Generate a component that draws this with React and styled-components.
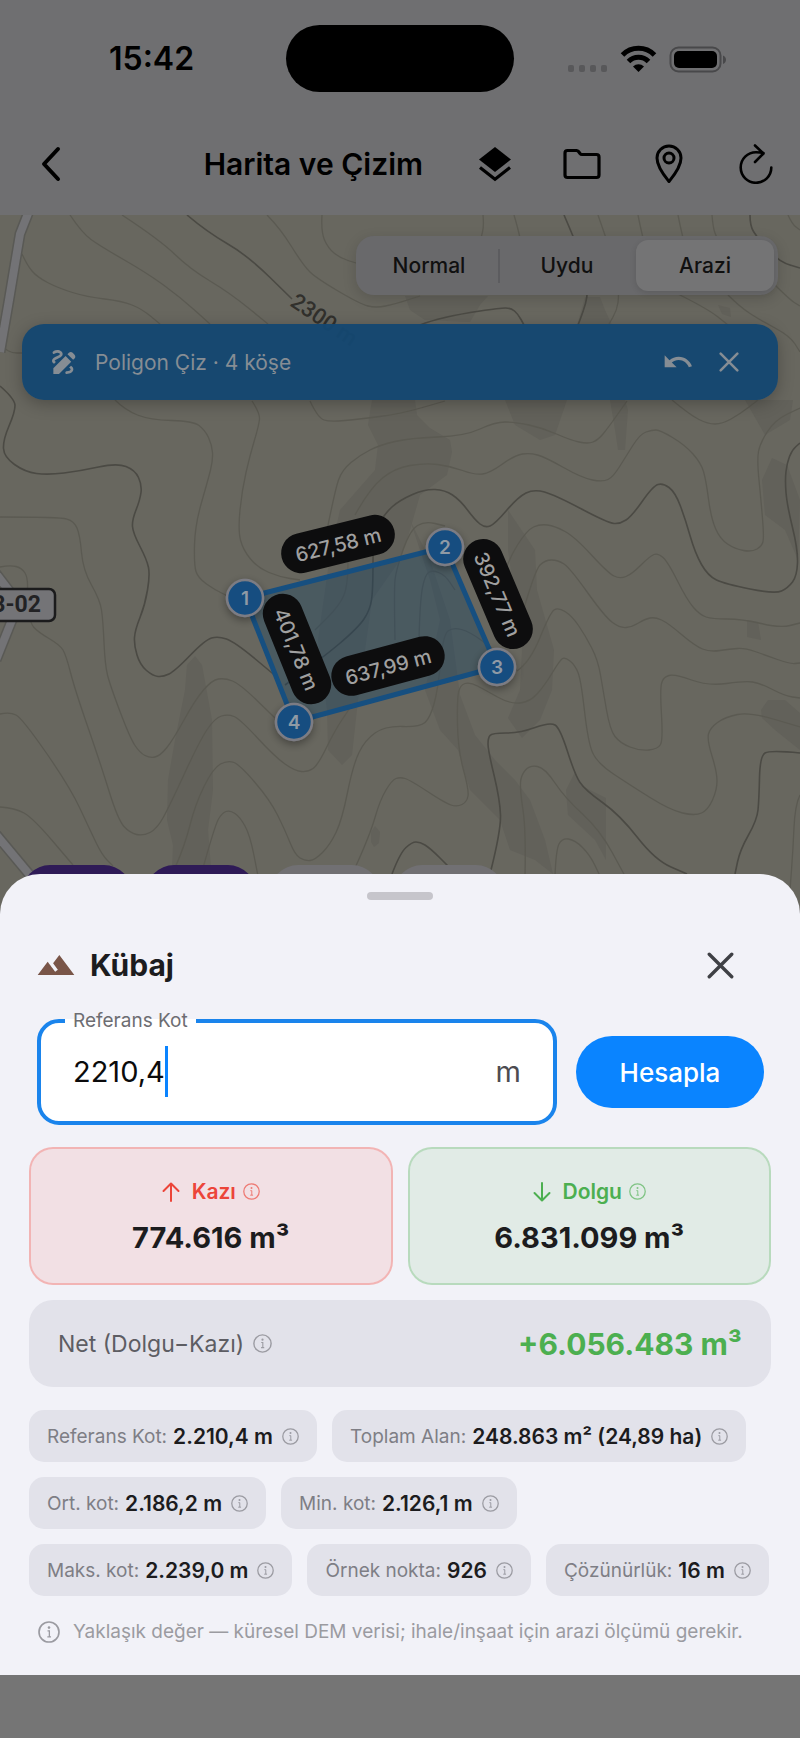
import React, { useState } from 'react';
import styled, { createGlobalStyle } from 'styled-components';
import { MdDraw, MdLandscape, MdUndo } from 'react-icons/md';

const shades = [
  '405,296 410,310 425,320 470,322 480,305 488,296',
  '585,297 600,297 605,310 612,325 577,325',
  '718,305 730,308 731,317 722,314',
  '372,400 368,425 378,445 375,470 340,510 330,555 318,640 327,710 328,750 342,765 352,755 358,700 372,600 400,560 410,530 420,495 447,475 452,452 450,440 430,428 417,415 415,400',
  '410,520 430,580 440,620 425,690 440,730 458,750 470,790 500,820 510,850 535,860 553,874 545,840 530,800 515,780 495,760 475,735 460,695 450,620 430,560',
  '508,510 535,550 537,590 554,650 552,690 540,720 522,738 508,718 520,690 522,650 515,600 508,550',
  '505,400 515,425 540,440 555,435 567,400',
  '610,400 615,430 618,450 625,450 628,410 625,400',
  '745,400 765,435 790,420 793,400',
  '762,480 772,458 787,465 800,500 798,560 785,530 765,515',
  '747,620 758,622 761,640 747,637',
  '761,710 768,700 785,700 800,713 800,750 775,730 762,718',
  '566,790 575,772 580,785 606,798 606,860 595,840 568,815',
  '187,665 195,656 202,665 212,720 213,790 208,830 211,868 172,868 173,845 167,820 168,780 175,740 185,690',
  '371,832 375,826 380,832 379,843 374,847 371,842',
];

const contours = [
  '22,254 27,265 37,277 58,288 87,297 122,301 142,309 160,324',
  '70,215 82,233 100,246 147,273 180,297 210,324',
  '122,215 160,240 190,269 230,293 268,324',
  '267,215 280,228 303,265 316,278 360,304 376,308 395,304 420,296',
  '322,215 321,232 328,248 340,258 356,263',
  '483,215 484,226 481,238',
  '514,215 517,225 520,238',
  '598,215 606,238 617,270 619,295 617,310 609,324',
  '638,215 640,225 643,238',
  '678,215 680,225 683,238',
  '712,215 713,228 717,238',
  '788,215 792,224 800,230',
  '678,294 708,309 728,325',
  '728,295 740,307 760,320 790,336 800,352',
  '773,283 790,300 800,306',
  '0,345 5,349 12,353 22,353',
  '115,400 125,410 150,420 193,421 205,430 212,445 213,460 208,480 195,525 194,565 198,578 215,590 230,597',
  '252,401 260,413 259,425 250,455 242,490 238,530 243,550 258,568 280,577 300,580',
  '310,401 318,418 330,422 360,419 400,414 445,401',
  '325,540 335,490 342,470 360,455 380,445 410,438 465,436 495,422 515,422 543,428 570,440 588,444 598,440 608,428 627,401',
  '355,515 370,488 395,468 425,463 450,466 475,475 490,473 515,455 530,453 545,457 582,478 603,482 613,477 625,458 640,434 652,430 660,430 685,445 701,463 706,480 711,518 720,539 735,549 752,552 762,546 764,537 761,500 757,460 760,443 775,420 800,408',
  '500,585 508,560 527,530 540,524 555,526 575,537 608,573 620,579 632,574 650,556 658,553 668,562 687,600 700,615 712,619 742,619 780,628 800,623',
  '522,615 535,570 545,560 558,560 570,568 605,617 620,628 632,627 645,619 655,617 668,623 695,646 710,652 730,649 745,648 765,655 790,664 800,663',
  '517,671 530,662 550,613 558,607 572,616 585,635 598,660 603,690 610,730 620,743 640,751 658,749 663,740 660,690 663,677 675,674 708,686 745,681 760,683 785,696 800,698',
  '355,868 370,835 380,800 392,780 400,777 410,780 445,803 457,807 467,802 469,790 458,750 457,700 460,685 470,682 485,690 510,704 530,702 545,685 560,660 565,657 575,665 581,680 588,742 597,763 630,785 670,810 695,816 708,810 717,790 717,772 707,740 710,728 725,717 750,712 800,727',
  '525,876 526,830 520,790 521,775 530,765 545,768 565,798 600,830 625,876',
  '555,876 556,850 562,838 575,840 590,855 600,876',
  '800,795 795,805 793,850 790,890',
  '672,400 690,415 708,424 722,424 740,414 758,400',
  '0,517 60,517 74,521 80,535 83,570 100,600 103,620 105,665 110,685 130,738 140,753 150,758 160,756 173,740 195,700 212,680 225,678 240,684 275,718',
  '0,567 10,565 22,568 28,578 27,600 30,623 38,632 60,645 66,655 75,690 100,762 118,820 130,833 143,836 157,829 170,805 200,740 215,718 228,714 240,719 275,757 295,771 308,772 318,765 335,730 352,705',
  '175,868 185,845 195,805 213,768 228,760 240,765 270,800 285,830 295,855 305,861 315,860 330,845 342,820 353,765 365,740 385,726 420,727 430,718 438,690 443,635 453,627 470,632 492,648',
  '203,868 215,825 222,813 230,810 240,817 250,835 258,876',
  '0,714 10,712 22,718 70,787 90,830 102,855 113,866',
  '0,807 15,808 33,818 73,865',
  '348,560 348,585 340,605 315,630',
  '395,640 394,590 396,570 410,530 425,521 445,526',
  '419,640 420,600 425,575 432,570 445,575 455,590',
];

const mainContours = [
  '187,215 207,232 247,255 292,299',
  '564,215 574,238 586,270 588,295 583,312 578,325',
  '750,215 750,226 757,237 765,246 780,262 800,268',
  '420,325 430,321 460,314 500,308 511,308 518,314 524,325',
  '0,386 15,399 15,412 3,440 4,457 25,472 48,475 80,471 117,463 135,470 142,485 140,500 132,520 133,533 147,560 150,575 145,605 135,630 134,645 140,665 153,676 163,677 175,671 205,640 218,636 235,642 278,678',
  '285,685 320,660 358,628 370,610 373,590 373,535 385,513 400,500 425,489 445,490 460,500 475,520 485,528 495,524 518,497 534,489 555,495 608,523 620,524 632,516 653,486 663,483 675,492 685,518 695,553 708,576 725,584 775,594 788,588 797,576 798,550 787,505 785,480 787,463 792,450 800,443',
  '491,870 501,830 500,800 488,750 488,738 492,733 520,733 550,722 560,728 575,775 585,790 620,815 655,860 687,874',
  '800,753 770,750 760,756 759,800 757,820 740,850 735,874',
  '392,874 400,853 412,842 420,842 430,848 450,868',
];

// Rounds the corners of a contour by running curves between its midpoints.
const toPath = (line) => {
  const pts = line.split(' ').map((pair) => pair.split(',').map(Number));
  let d = `M${pts[0]}`;
  for (let i = 1; i < pts.length - 1; i++) {
    const [x, y] = pts[i];
    const [nx, ny] = pts[i + 1];
    d += ` Q${x},${y} ${(x + nx) / 2},${(y + ny) / 2}`;
  }
  return `${d} L${pts[pts.length - 1]}`;
};

const corners = [
  { id: 1, x: 245, y: 598 },
  { id: 2, x: 445, y: 547 },
  { id: 3, x: 497, y: 667 },
  { id: 4, x: 294, y: 722 },
];

const edges = [
  { text: '627,58 m', x: 338, y: 544, angle: -14 },
  { text: '392,77 m', x: 498, y: 594, angle: 67 },
  { text: '637,99 m', x: 388, y: 666, angle: -15 },
  { text: '401,78 m', x: 297, y: 649, angle: 68 },
];

const stats = [
  [
    { label: 'Referans Kot:', value: '2.210,4 m' },
    { label: 'Toplam Alan:', value: '248.863 m² (24,89 ha)' },
  ],
  [
    { label: 'Ort. kot:', value: '2.186,2 m' },
    { label: 'Min. kot:', value: '2.126,1 m' },
  ],
  [
    { label: 'Maks. kot:', value: '2.239,0 m' },
    { label: 'Örnek nokta:', value: '926' },
    { label: 'Çözünürlük:', value: '16 m' },
  ],
];

const InfoIcon = ({ size = 17 }) => (
  <svg width={size} height={size} viewBox='0 0 24 24' fill='none'>
    <circle cx='12' cy='12' r='10.9' stroke='currentColor' strokeWidth='1.8' />
    <circle cx='12' cy='7.2' r='1.4' fill='currentColor' />
    <path
      d='M10.4 10.8h2v6.2M10.2 17.200h4'
      stroke='currentColor'
      strokeWidth='1.4'
    />
  </svg>
);

const CloseIcon = ({ size, stroke }) => (
  <svg width={size} height={size} viewBox='0 0 24 24' fill='none'>
    <path
      d='M2 2l20 20M22 2L2 22'
      stroke='currentColor'
      strokeWidth={stroke}
      strokeLinecap='round'
    />
  </svg>
);

const ArrowIcon = ({ down }) => (
  <svg width='18' height='20' viewBox='0 0 18 20' fill='none'>
    <path
      d={down ? 'M9 1v17M1.5 11L9 18.5l7.5-7.5' : 'M9 19V2M1.5 9L9 1.5 16.5 9'}
      stroke='currentColor'
      strokeWidth='2'
      strokeLinecap='round'
      strokeLinejoin='round'
    />
  </svg>
);

const StatusIcons = () => (
  <svg width='160' height='28' viewBox='567 44 160 28' fill='none'>
    {[568, 579, 590, 601].map((x) => (
      <rect key={x} x={x} y='64' width='6' height='7' rx='2' fill='#58585a' />
    ))}
    <path d='M622.5 54a22.5 22.5 0 0 1 32 0' stroke='#000' strokeWidth='5' />
    <path d='M628.5 60.5a14 14 0 0 1 20 0' stroke='#000' strokeWidth='5' />
    <path d='M638.5 71l-5.5-5.5a8 8 0 0 1 11 0z' fill='#000' />
    <rect
      x='670.5'
      y='46.5'
      width='50'
      height='24'
      rx='8'
      stroke='#48484a'
      strokeWidth='2'
    />
    <rect x='674' y='50' width='43' height='17' rx='5' fill='#000' />
    <path d='M723 54.5c4 1.5 4 7 0 8.5z' fill='#48484a' />
  </svg>
);

const Terrain = () => (
  <TerrainSvg viewBox='0 215 800 695' preserveAspectRatio='xMidYMin slice'>
    <defs>
      <filter id='drop' x='-50%' y='-50%' width='200%' height='200%'>
        <feDropShadow dx='0' dy='3' stdDeviation='4' floodOpacity='0.35' />
      </filter>
    </defs>
    <rect x='-400' y='215' width='1600' height='1400' fill='#68675f' />
    {shades.map((points) => (
      <polygon key={points} points={points} fill='#62615a' />
    ))}
    <g fill='none' stroke='#5b5a52' strokeWidth='1.3'>
      {contours.map((line) => (
        <path key={line} d={toPath(line)} />
      ))}
    </g>
    <g fill='none' stroke='#4b4a44' strokeWidth='1.6'>
      {mainContours.map((line) => (
        <path key={line} d={toPath(line)} />
      ))}
    </g>
    <g fill='none' stroke='#595955' strokeWidth='11'>
      <path d='M29 211L20 234 9 300 0 352' />
      <path d='M-6 571L10 592' />
      <path d='M12 620L-4 660' />
      <path d='M-6 832L34 880' />
    </g>
    <g fill='none' stroke='#737376' strokeWidth='8'>
      <path d='M29 211L20 234 9 300 0 352' />
      <path d='M-6 571L10 592' />
      <path d='M12 620L-4 660' />
      <path d='M-6 832L34 880' />
    </g>
    <rect
      x='-20'
      y='589'
      width='75'
      height='32'
      rx='6'
      fill='#747477'
      stroke='#1b1b1c'
      strokeWidth='2.5'
    />
    <SignText x='41' y='612'>
      3-02
    </SignText>
    <HeightText transform='translate(289 305) rotate(34)'>2300 m</HeightText>

    <polygon
      points={corners.map(({ x, y }) => `${x},${y}`).join(' ')}
      fill='rgba(20, 66, 100, 0.35)'
      stroke='#164f80'
      strokeWidth='5'
    />
    {edges.map(({ text, x, y, angle }) => (
      <g key={text} transform={`translate(${x} ${y}) rotate(${angle})`}>
        <rect x='-58' y='-20' width='116' height='40' rx='20' fill='#0d0d0e' />
        <EdgeText y='8'>{text}</EdgeText>
      </g>
    ))}
    {corners.map(({ id, x, y }) => (
      <g key={id}>
        <circle
          cx={x}
          cy={y}
          r='18'
          fill='#164e80'
          stroke='#7c7c84'
          strokeWidth='2.5'
          filter='url(#drop)'
        />
        <CornerText x={x} y={y + 7}>
          {id}
        </CornerText>
      </g>
    ))}
  </TerrainSvg>
);

const App = () => {
  const [level, setLevel] = useState('2210,4');
  const [layer, setLayer] = useState('Arazi');

  return (
    <Page>
      <GlobalStyle />
      <StatusBar>
        <Time>15:42</Time>
        <Island />
        <StatusIcons />
      </StatusBar>

      <NavBar>
        <IconButton aria-label='Geri'>
          <svg width='22' height='36' viewBox='0 0 22 36' fill='none'>
            <path
              d='M18 3L4 18l14 15'
              stroke='#000'
              strokeWidth='4'
              strokeLinecap='round'
              strokeLinejoin='round'
            />
          </svg>
        </IconButton>
        <Title>Harita ve Çizim</Title>
        <Actions>
          <IconButton aria-label='Katmanlar'>
            <svg width='34' height='36' viewBox='0 0 34 36'>
              <path d='M17 1l16 12.5L17 26 1 13.5z' fill='#000' />
              <path
                d='M2 21.5l15 11.8 15-11.8'
                fill='none'
                stroke='#000'
                strokeWidth='3.2'
              />
            </svg>
          </IconButton>
          <IconButton aria-label='Klasör'>
            <svg width='38' height='32' viewBox='0 0 38 32' fill='none'>
              <path
                d='M4.5 2.5h9q1.2 0 2 1l1.5 2q.8 1 2 1h14.5q2.5 0 2.5 2.5v18q0 2.5-2.5 2.5h-29q-2.5 0-2.5-2.5V5q0-2.5 2.5-2.5z'
                stroke='#000'
                strokeWidth='3.2'
              />
            </svg>
          </IconButton>
          <IconButton aria-label='Konum'>
            <svg width='28' height='40' viewBox='0 0 28 40' fill='none'>
              <path
                d='M14 37.5C12 35 2 23.5 2 14a12 12 0 0 1 24 0c0 9.5-10 21-12 23.500z'
                stroke='#000'
                strokeWidth='3'
                strokeLinejoin='round'
              />
              <circle cx='14' cy='14' r='5' stroke='#000' strokeWidth='3' />
            </svg>
          </IconButton>
          <IconButton aria-label='Yenile'>
            <svg width='34' height='40' viewBox='0 0 34 40' fill='none'>
              <path
                d='M32.3 23.5a15.3 15.3 0 1 1-15.3-15.3q4 0 7.5.8M16 1.5l8.5 8-8.5 8.5'
                stroke='#000'
                strokeWidth='2.6'
                strokeLinecap='round'
                strokeLinejoin='round'
              />
            </svg>
          </IconButton>
        </Actions>
      </NavBar>

      <MapArea>
        <Terrain />
        <Segments>
          {['Normal', 'Uydu', 'Arazi'].map((name) => (
            <Segment
              key={name}
              $active={name === layer}
              onClick={() => setLayer(name)}
            >
              {name}
            </Segment>
          ))}
        </Segments>
        <Banner>
          <MdDraw size={32} />
          <BannerText>Poligon Çiz · 4 köşe</BannerText>
          <BannerButton aria-label='Geri al'>
            <MdUndo size={32} />
          </BannerButton>
          <BannerButton aria-label='İptal'>
            <CloseIcon size={20} stroke={3} />
          </BannerButton>
        </Banner>
        <Tools>
          <Tool $on aria-label='Poligon' />
          <Tool $on aria-label='Kübaj' />
          <Tool aria-label='Mesafe' />
          <Tool aria-label='Nokta' />
        </Tools>
      </MapArea>

      <Sheet>
        <Handle />
        <SheetHeader>
          <MdLandscape size={40} color='#795548' />
          <SheetTitle>Kübaj</SheetTitle>
          <CloseButton aria-label='Kapat'>
            <CloseIcon size={27} stroke={3} />
          </CloseButton>
        </SheetHeader>

        <Form onSubmit={(e) => e.preventDefault()}>
          <Field>
            <Legend>
              <label htmlFor='level'>Referans Kot</label>
            </Legend>
            <FieldRow>
              <LevelInput
                id='level'
                value={level}
                inputMode='decimal'
                autoComplete='off'
                onChange={(e) => setLevel(e.target.value)}
              />
              <Caret />
              <Unit>m</Unit>
            </FieldRow>
          </Field>
          <Submit type='submit'>Hesapla</Submit>
        </Form>

        <Cards>
          <Card $tint='244, 67, 54'>
            <CardLabel $color='#ec4539'>
              <ArrowIcon />
              <strong>Kazı</strong>
              <InfoIcon />
            </CardLabel>
            <CardValue>774.616 m³</CardValue>
          </Card>
          <Card $tint='76, 175, 80'>
            <CardLabel $color='#4caf50'>
              <ArrowIcon down />
              <strong>Dolgu</strong>
              <InfoIcon />
            </CardLabel>
            <CardValue>6.831.099 m³</CardValue>
          </Card>
        </Cards>

        <Net>
          <NetLabel>
            Net (Dolgu−Kazı)
            <InfoIcon size={19} />
          </NetLabel>
          <NetValue>+6.056.483 m³</NetValue>
        </Net>

        <Stats>
          {stats.map((row) => (
            <StatRow key={row[0].label}>
              {row.map(({ label, value }) => (
                <Stat key={label}>
                  <span>{label}</span>
                  <strong>{value}</strong>
                  <InfoIcon />
                </Stat>
              ))}
            </StatRow>
          ))}
        </Stats>

        <Note>
          <InfoIcon size={22} />
          Yaklaşık değer — küresel DEM verisi; ihale/inşaat için arazi ölçümü
          gerekir.
        </Note>
      </Sheet>
    </Page>
  );
};

const GlobalStyle = createGlobalStyle`
  * {
    box-sizing: border-box;
  }
  body {
    margin: 0;
    background: #757575;
    font-family: Inter, 'Liberation Sans', sans-serif;
  }
  button,
  input {
    font-family: inherit;
  }
  button {
    display: flex;
    align-items: center;
    justify-content: center;
    padding: 0;
    border: none;
    background: none;
    color: inherit;
    cursor: pointer;
  }
  svg {
    flex-shrink: 0;
  }
`;

const Page = styled.main`
  display: flex;
  flex-direction: column;
  padding-bottom: 63px;
`;

const StatusBar = styled.div`
  display: grid;
  grid-template-columns: 1fr auto 1fr;
  align-items: center;
  height: 117px;
  padding: 0 73px;
  background: #6f6f71;
  svg {
    justify-self: end;
  }
`;

const Time = styled.div`
  padding-left: 36px;
  font-size: 32px;
  font-weight: 600;
`;

const Island = styled.div`
  width: 228px;
  height: 67px;
  border-radius: 34px;
  background: #000;
`;

const NavBar = styled.header`
  display: flex;
  align-items: center;
  height: 98px;
  padding: 0 16px 4px 23px;
  background: #6f6f71;
`;

const IconButton = styled.button`
  width: 56px;
  height: 56px;
`;

const Title = styled.h1`
  margin: 0 44px 0 auto;
  font-size: 30px;
  font-weight: 600;
  white-space: nowrap;
`;

const Actions = styled.div`
  display: flex;
  gap: 31px;
`;

const MapArea = styled.section`
  position: relative;
  display: flex;
  flex-direction: column;
  min-height: 695px;
  padding: 21px 22px 0;
  overflow: hidden;
`;

const TerrainSvg = styled.svg`
  position: absolute;
  inset: 0;
  width: 100%;
  height: 100%;
`;

const MapText = styled.text`
  font-family: Inter, 'Liberation Sans', sans-serif;
  font-weight: 500;
  text-anchor: middle;
`;

const EdgeText = styled(MapText)`
  font-size: 20px;
  fill: #a0a0a0;
`;

const CornerText = styled(MapText)`
  font-size: 19px;
  font-weight: 600;
  fill: #8f9aa5;
`;

const SignText = styled(MapText)`
  font-family: Roboto, sans-serif;
  font-size: 23px;
  font-weight: 700;
  text-anchor: end;
  fill: #222224;
`;

const HeightText = styled(MapText)`
  font-family: Roboto, sans-serif;
  font-size: 22px;
  text-anchor: start;
  fill: #31302c;
`;

const Segments = styled.div`
  position: relative;
  display: grid;
  grid-template-columns: repeat(3, 1fr);
  align-self: flex-end;
  width: 422px;
  height: 59px;
  padding: 4px;
  border-radius: 18px;
  background: #69696b;
  box-shadow: 0 4px 14px rgba(0, 0, 0, 0.15);
`;

const Segment = styled.button`
  border-radius: 12px;
  background: ${({ $active }) => ($active ? '#747475' : 'none')};
  box-shadow: ${({ $active }) =>
    $active ? '0 2px 6px rgba(0, 0, 0, 0.12)' : 'none'};
  color: #101010;
  font-size: 21px;
  font-weight: 500;
  &:first-child::after {
    content: '';
    position: absolute;
    left: 142px;
    width: 2px;
    height: 34px;
    background: #5c5c5f;
  }
`;

const Banner = styled.div`
  position: relative;
  display: flex;
  align-items: center;
  height: 76px;
  margin-top: 29px;
  padding: 0 29px 0 26px;
  border-radius: 22px;
  background: rgba(20, 71, 112, 0.96);
  box-shadow: 0 4px 16px rgba(0, 0, 0, 0.25);
  color: #868d94;
`;

const BannerText = styled.div`
  flex: 1;
  margin-left: 15px;
  font-size: 21px;
`;

const BannerButton = styled.button`
  width: 40px;
  height: 40px;
  margin-left: 11px;
`;

const Tools = styled.div`
  position: relative;
  display: flex;
  gap: 14px;
  height: 45px;
  margin-top: auto;
`;

const Tool = styled.button`
  width: 110px;
  height: 72px;
  border-radius: 28px;
  background: ${({ $on }) => ($on ? '#2f1b57' : '#717073')};
`;

const Sheet = styled.section`
  position: relative;
  display: flex;
  flex-direction: column;
  margin-top: -36px;
  padding: 18px 29px 29px;
  border-radius: 40px 40px 0 0;
  background: #f2f2f8;
  color: #1c1c1e;
`;

const Handle = styled.div`
  align-self: center;
  width: 66px;
  height: 8px;
  border-radius: 4px;
  background: #c6c5cb;
`;

const SheetHeader = styled.div`
  display: flex;
  align-items: center;
  height: 56px;
  margin-top: 37px;
  padding: 0 23px 0 7px;
`;

const SheetTitle = styled.h2`
  flex: 1;
  margin: 0 0 0 14px;
  font-size: 30px;
  font-weight: 700;
`;

const CloseButton = styled.button`
  width: 56px;
  height: 56px;
  color: #3f4045;
`;

const Form = styled.form`
  display: flex;
  align-items: center;
  gap: 19px;
  margin-top: 16px;
  padding: 0 7px 0 8px;
`;

const Field = styled.fieldset`
  flex: 1;
  min-width: 0;
  height: 116px;
  margin: 0;
  padding: 0 32px;
  border: 4px solid #1a84ec;
  border-radius: 22px;
  background: #fff;
`;

const Legend = styled.legend`
  margin-left: -8px;
  padding: 0 8px;
  color: #6d6d72;
  font-size: 19px;
  line-height: 24px;
`;

const FieldRow = styled.div`
  display: flex;
  align-items: center;
  height: 76px;
`;

const LevelInput = styled.input`
  field-sizing: content;
  min-width: 20px;
  padding: 0;
  border: none;
  outline: none;
  background: none;
  caret-color: transparent;
  color: #0b0b0c;
  font-size: 29px;
`;

const Caret = styled.span`
  width: 3px;
  height: 51px;
  background: #0a84ff;
`;

const Unit = styled.span`
  margin-left: auto;
  color: #4c4c51;
  font-size: 29px;
`;

const Submit = styled.button`
  width: 188px;
  height: 72px;
  margin-top: 10px;
  border-radius: 36px;
  background: #0a84ff;
  color: #fff;
  font-size: 26px;
  font-weight: 500;
`;

const Cards = styled.div`
  display: grid;
  grid-template-columns: 1fr 1fr;
  gap: 15px;
  margin-top: 22px;
`;

const Card = styled.div`
  display: flex;
  flex-direction: column;
  align-items: center;
  justify-content: center;
  gap: 12px;
  height: 138px;
  padding-top: 3px;
  border: 2px solid rgba(${({ $tint }) => $tint}, 0.35);
  border-radius: 24px;
  background: rgba(${({ $tint }) => $tint}, 0.1);
  background-clip: padding-box;
`;

const CardLabel = styled.div`
  display: flex;
  align-items: center;
  color: ${({ $color }) => $color};
  font-size: 21px;
  line-height: 28px;
  strong {
    margin: 0 7px 0 12px;
    font-weight: 600;
  }
  svg:last-child {
    opacity: 0.65;
  }
`;

const CardValue = styled.div`
  font-size: 29px;
  font-weight: 700;
  line-height: 40px;
`;

const Net = styled.div`
  display: flex;
  align-items: center;
  justify-content: space-between;
  height: 87px;
  margin-top: 15px;
  padding: 0 29px;
  border-radius: 24px;
  background: #e2e2ea;
`;

const NetLabel = styled.div`
  display: flex;
  align-items: center;
  gap: 9px;
  color: #5d5d63;
  font-size: 23px;
  svg {
    color: #9b9ba2;
  }
`;

const NetValue = styled.div`
  color: #4caf50;
  font-size: 30px;
  font-weight: 700;
`;

const Stats = styled.div`
  display: flex;
  flex-direction: column;
  gap: 15px;
  margin-top: 23px;
`;

const StatRow = styled.div`
  display: flex;
  gap: 15px;
`;

const Stat = styled.div`
  display: flex;
  align-items: center;
  height: 52px;
  padding: 0 18px;
  border-radius: 15px;
  background: #e2e2ea;
  color: #7e7e85;
  font-size: 19px;
  white-space: nowrap;
  strong {
    margin: 0 9px 0 6px;
    color: #1c1c1e;
    font-size: 21px;
    font-weight: 600;
  }
  svg {
    color: #9b9ba2;
  }
`;

const Note = styled.p`
  display: flex;
  align-items: center;
  gap: 13px;
  margin: 22px 0 0;
  padding-left: 9px;
  color: #9b9ba1;
  font-size: 19px;
  line-height: 28px;
`;

export default App;
